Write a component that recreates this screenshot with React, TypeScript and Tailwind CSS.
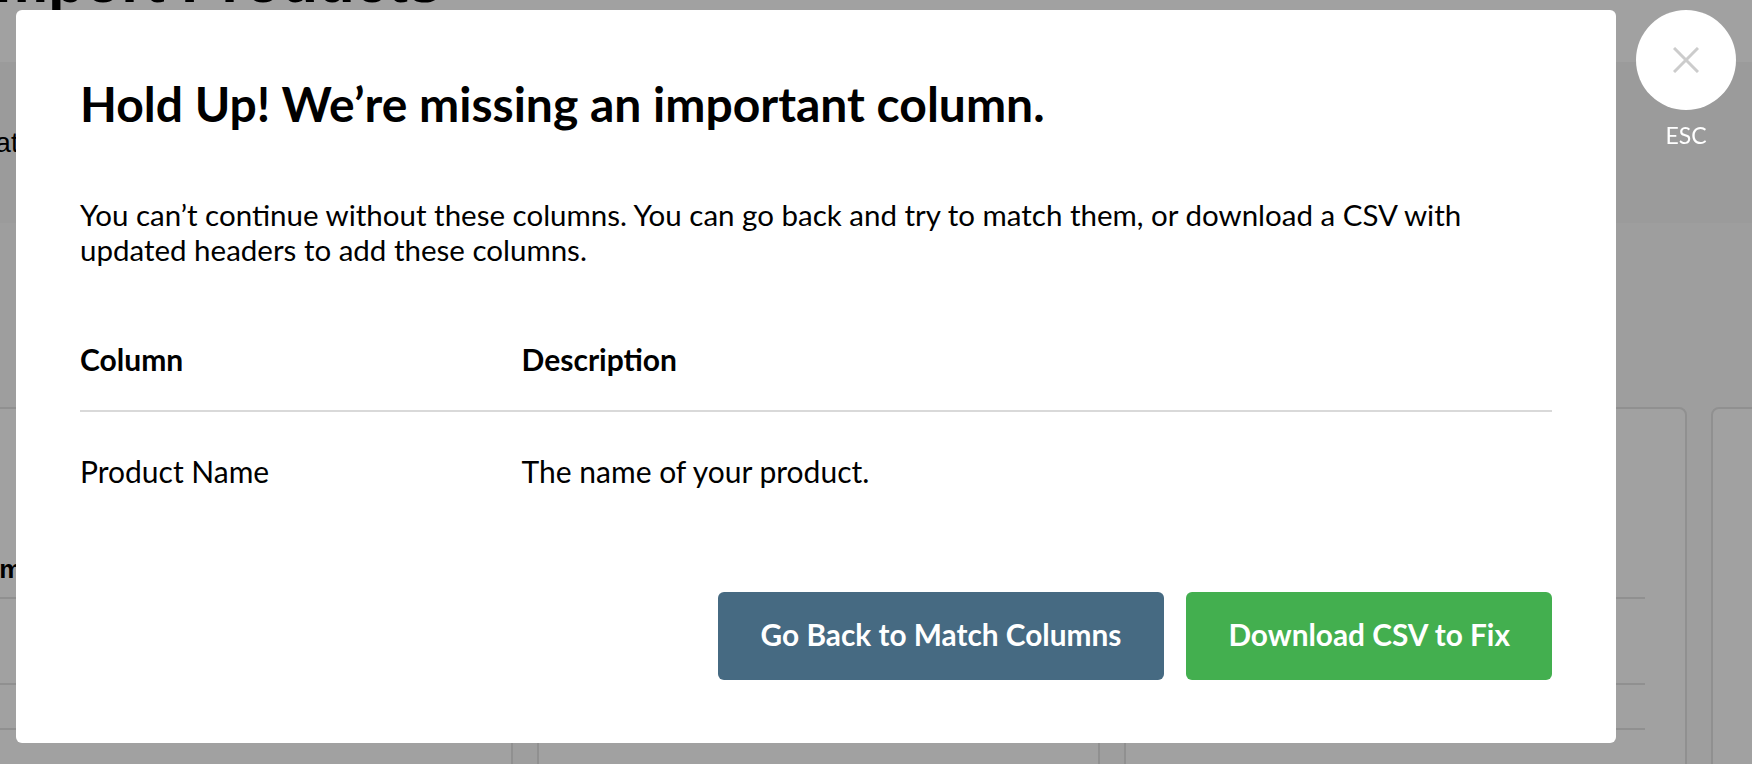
import { useState } from 'react';

const missing = [{ column: 'Product Name', description: 'The name of your product.' }];

const cards = ['Imported Column', 'Imported Column', 'Imported Column', 'Imported Column'];

function BackgroundPage() {
  return (
    <div className="font-['Liberation_Sans',Arial,sans-serif] text-black">
      <div className="flex h-[62px] flex-col">
        <h1 className="-mt-[51px] -ml-[22px] text-[60px] font-bold leading-[66px]">Import Products</h1>
      </div>
      <div className="flex h-[161px] items-center bg-[#f6f6f6]">
        <span className="-ml-[28px] text-[28px]">Match Columns</span>
      </div>
      <div className="h-[541px] bg-[#fbfbfb] pt-[184px]">
        <div className="-ml-[50px] flex gap-6">
          {cards.map((label, i) => (
            <div key={i} className="h-[400px] w-[563px] shrink-0 rounded-lg border-2 border-[#e4e4e4] bg-white px-10 pt-[145px]">
              <p className="text-[26px] font-bold leading-[30px]">{label}</p>
              <div className="mt-[13px] border-b-2 border-[#e4e4e4]" />
              <div className="h-[86px] border-b-2 border-[#e4e4e4]" />
              <div className="h-[45px] border-b-2 border-[#e4e4e4]" />
            </div>
          ))}
        </div>
      </div>
    </div>
  );
}

export default function App() {
  const [open] = useState(true);

  return (
    <div className="relative h-[764px] w-full overflow-hidden bg-white">
      <BackgroundPage />

      {open && (
        <div className="fixed inset-0 flex gap-5 bg-black/[0.37] px-4 pt-[10px] font-['Lato','Noto_Sans',sans-serif]">
          <div className="h-fit flex-1 rounded-md bg-white px-16 pt-[65px] pb-[63px] text-black">
            <h2 className="text-[48px] font-bold leading-[1.2]">Hold Up! We’re missing an important column.</h2>
            <p className="mt-[64px] text-[29.5px] leading-[35px]">
              You can’t continue without these columns. You can go back and try to match them, or download a CSV with
              updated headers to add these columns.
            </p>

            <table className="mt-[75px] w-full text-left text-[30px] leading-[35px]">
              <thead>
                <tr className="border-b-2 border-[#d9d9d9]">
                  <th className="w-[30%] pb-[33px] font-bold">Column</th>
                  <th className="pb-[33px] font-bold">Description</th>
                </tr>
              </thead>
              <tbody>
                {missing.map((row) => (
                  <tr key={row.column}>
                    <td className="pt-[42px]">{row.column}</td>
                    <td className="pt-[42px]">{row.description}</td>
                  </tr>
                ))}
              </tbody>
            </table>

            <div className="mt-[103px] flex justify-end gap-[22px]">
              <button className="h-[88px] rounded-md bg-[#466a82] px-[43px] text-[29.8px] font-bold text-white">
                Go Back to Match Columns
              </button>
              <button className="h-[88px] rounded-md bg-[#43af4f] px-[42px] text-[29.8px] font-bold text-white">
                Download CSV to Fix
              </button>
            </div>
          </div>

          <div className="flex w-[100px] shrink-0 flex-col items-center">
            <button className="flex h-[100px] w-[100px] items-center justify-center rounded-full bg-white">
              <svg width="26" height="26" viewBox="0 0 26 26" fill="none" stroke="#cccccc" strokeWidth="3">
                <line x1="1" y1="1" x2="25" y2="25" />
                <line x1="25" y1="1" x2="1" y2="25" />
              </svg>
            </button>
            <span className="mt-3 text-[23px] leading-[1.2] text-white">ESC</span>
          </div>
        </div>
      )}
    </div>
  );
}
